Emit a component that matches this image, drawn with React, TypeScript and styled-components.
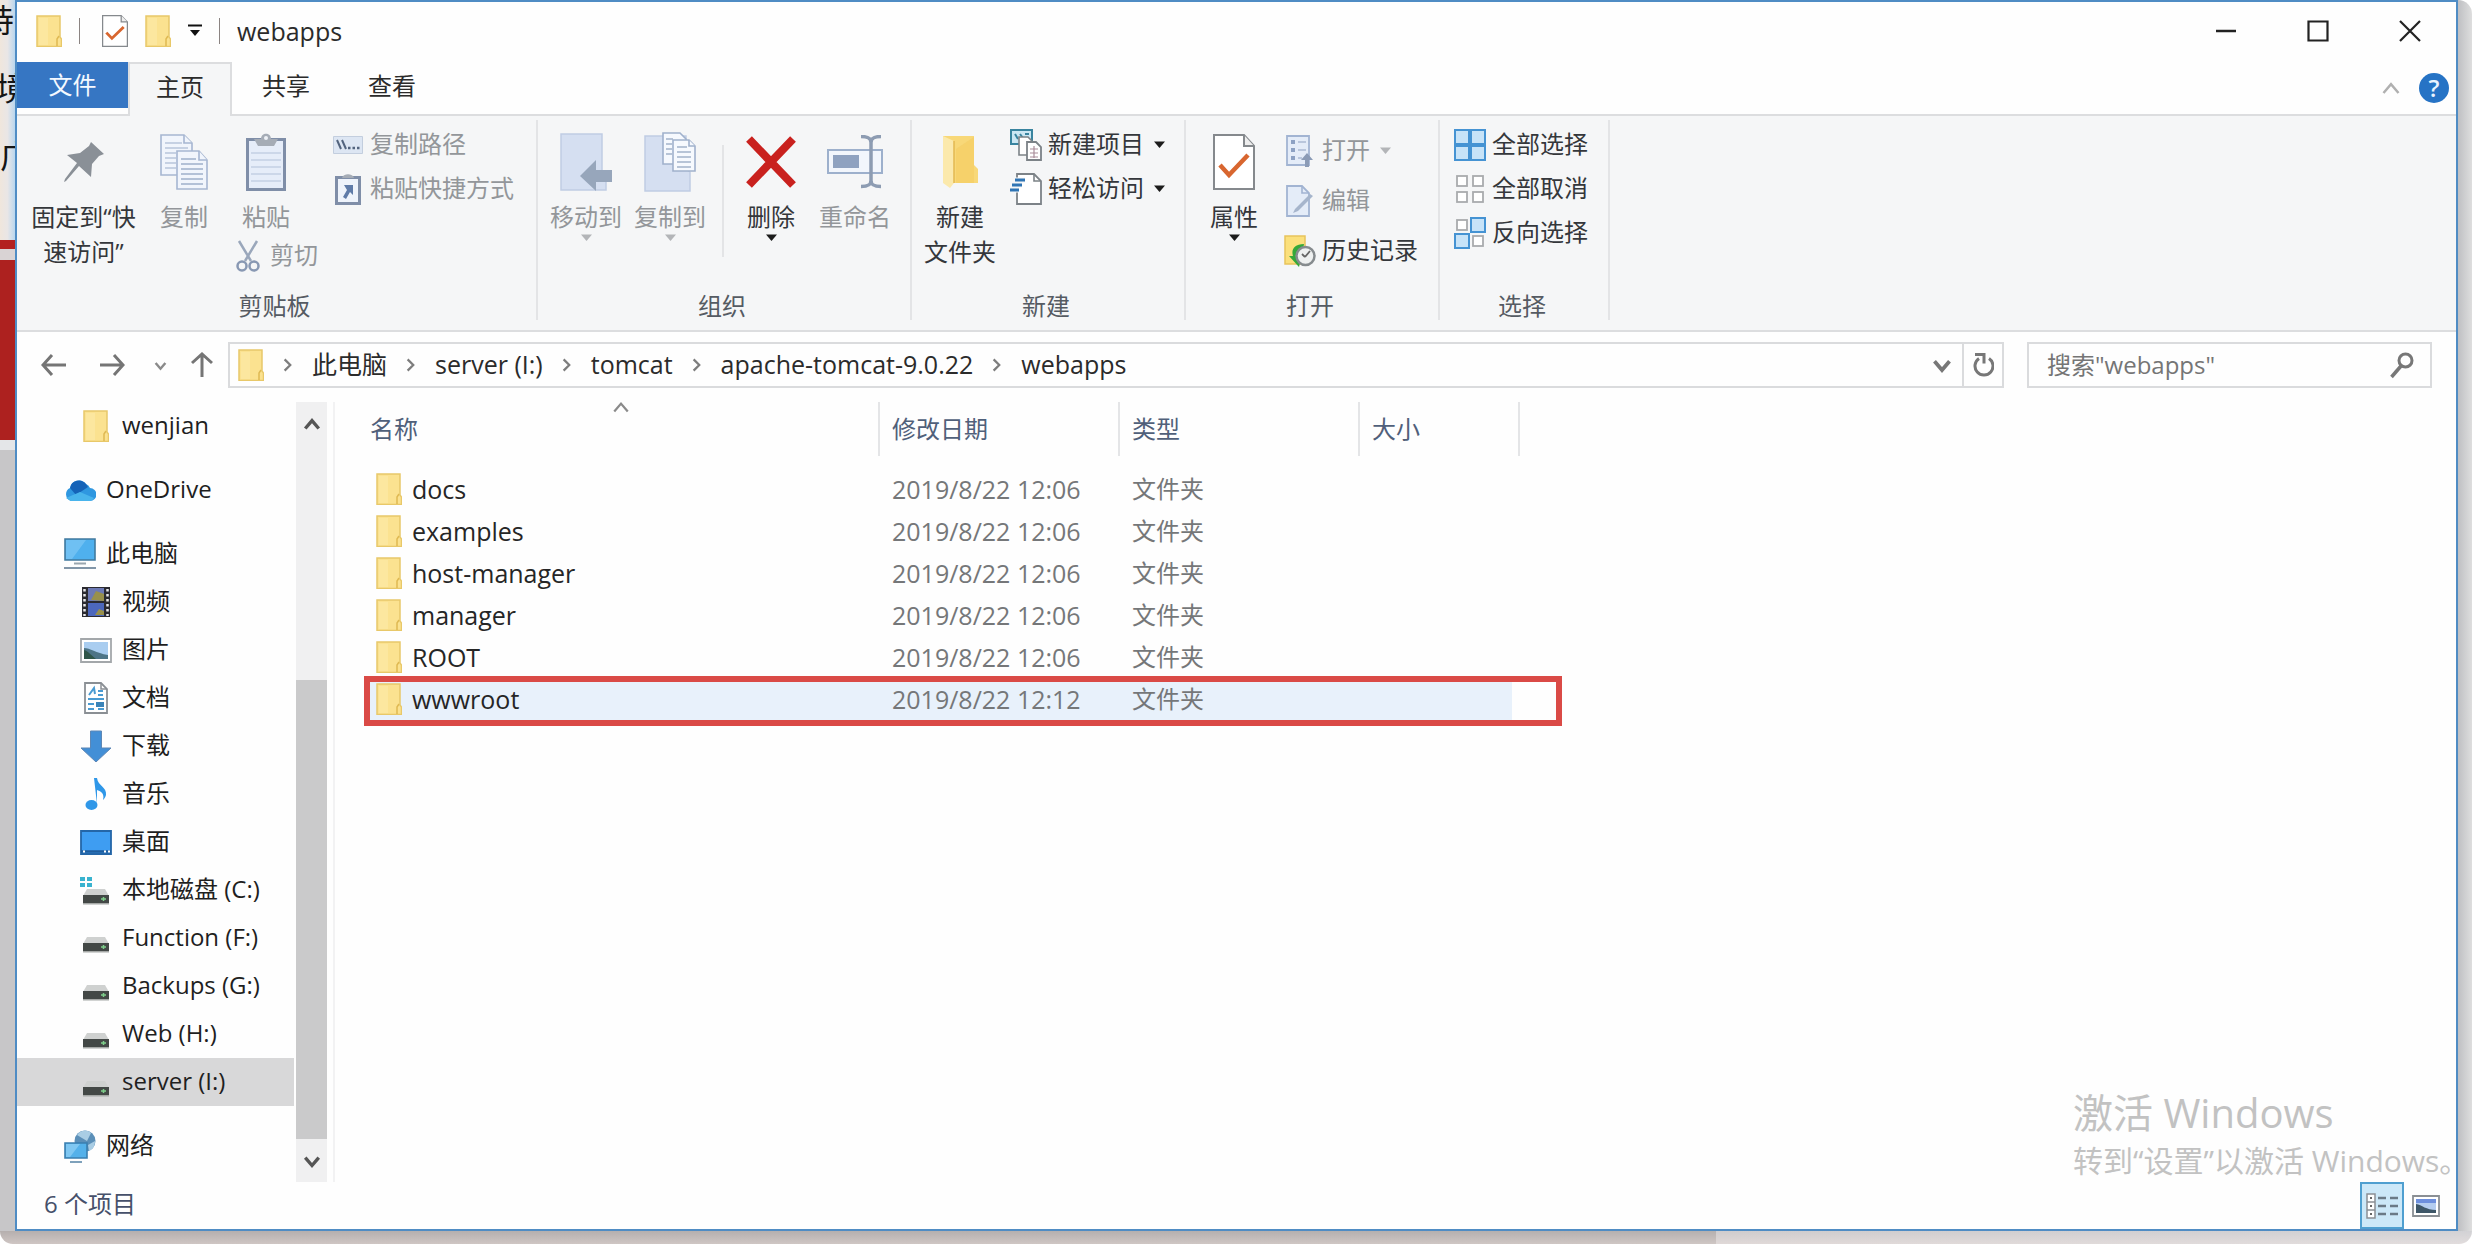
import React from "react";
import styled, { createGlobalStyle, css } from "styled-components";

const Global = createGlobalStyle`
  *, *::before, *::after { box-sizing: border-box; }
  body {
    margin: 0;
    background: #ffffff;
    font-family: "Open Sans", "Noto Sans CJK SC", "Microsoft YaHei", sans-serif;
    font-size: 24px;
    color: #2b2b2b;
  }
  button, input {
    font: inherit;
    color: inherit;
    background: none;
    border: 0;
    padding: 0;
    margin: 0;
  }
  svg { display: block; flex: none; }
  h1, ul, nav { margin: 0; padding: 0; list-style: none; }
`;

/* ---------- icons ---------- */

const FolderIcon = () => (
  <svg width="26" height="32" viewBox="0 0 26 32">
    <path d="M1 1h23v21l1.500 2v7.500H1z" fill="#fbe290" stroke="#e8c869" strokeWidth="1.500" />
    <path d="M3 3h9v27H3z" fill="#fdebae" opacity=".5" />
    <path d="M21 31v-7l2-3" fill="none" stroke="#dfb952" strokeWidth="1.500" />
  </svg>
);

const CheckDocIcon = ({ w, h }: { w: number; h: number }) => (
  <svg width={w} height={h} viewBox="0 0 42 56" preserveAspectRatio="none">
    <path d="M1 1h30l10 11v43H1z" fill="#fff" stroke="#85898d" strokeWidth="2" />
    <path d="M31 1v11h10" fill="#eee" stroke="#85898d" strokeWidth="2" />
    <path d="M7 31l9 10 19-20" fill="none" stroke="#d8662f" strokeWidth="4.500" />
  </svg>
);

const QuickMenuIcon = () => (
  <svg width="14" height="14" viewBox="0 0 14 14">
    <path d="M0 1.500h14" stroke="#111" strokeWidth="2" />
    <path d="M2 6h10l-5 6z" fill="#111" />
  </svg>
);

const CaretIcon = ({ color = "#1c1c1c" }: { color?: string }) => (
  <svg width="11" height="8" viewBox="0 0 11 8">
    <path d="M0 0.500h11L5.500 7z" fill={color} />
  </svg>
);

type Dir = "up" | "down" | "right";
const chevrons: Record<Dir, string> = {
  up: "M2 12l6-7 6 7",
  down: "M2 5l6 7 6-7",
  right: "M5 3l5 5-5 5",
};
const Chevron = ({ dir, color = "#777", width = 2, size = 18 }: { dir: Dir; color?: string; width?: number; size?: number }) => (
  <svg width={size} height={size} viewBox="0 0 16 16">
    <path d={chevrons[dir]} fill="none" stroke={color} strokeWidth={width} />
  </svg>
);

const MinimizeIcon = () => (
  <svg width="22" height="22" viewBox="0 0 22 22"><path d="M1 11h20" stroke="#222" strokeWidth="2.500" /></svg>
);
const MaximizeIcon = () => (
  <svg width="22" height="22" viewBox="0 0 22 22"><path d="M1.500 1.500h19v19h-19z" fill="none" stroke="#222" strokeWidth="2.200" /></svg>
);
const CloseIcon = () => (
  <svg width="22" height="22" viewBox="0 0 22 22"><path d="M1 1l20 20M21 1L1 21" stroke="#222" strokeWidth="2.200" /></svg>
);

const PinIcon = () => (
  <svg width="42" height="42" viewBox="0 0 42 42">
    <path d="M28 1l13 12-5 2-7 8-1 13-12-11L3 40l-2 1 1-3 12-16L4 14l13-2 9-7z" fill="#8a9097" />
  </svg>
);

const SheetPair = () => (
  <svg width="48" height="56" viewBox="0 0 48 56">
    <g fill="#f1f5fc" stroke="#a6b6d1" strokeWidth="1.600">
      <path d="M1 1h23l8 8v32H1z" />
      <path d="M24 1v8h8" />
      <path d="M17 17h22l8 9v29H17z" />
      <path d="M39 17v9h8" />
    </g>
    <path d="M5 9h17M5 14h23M5 19h11M5 24h11M5 29h11M5 34h11" stroke="#b8c5da" strokeWidth="1.500" />
    <path d="M21 25h15M21 30h22M21 35h22M21 40h22M21 45h22M21 50h22" stroke="#9fb0ca" strokeWidth="1.500" />
  </svg>
);

const ClipboardIcon = () => (
  <svg width="40" height="58" viewBox="0 0 40 58">
    <path d="M1.500 6.500h37v50h-37z" fill="#e6edf9" stroke="#7f8ea8" strokeWidth="3" />
    <path d="M5 20h30M5 27h30M5 34h30M5 41h30M5 48h30" stroke="#c3cfe3" strokeWidth="1.500" />
    <path d="M8 6h7c0-7 10-7 10 0h7l-4 7H12z" fill="#a5acb6" />
    <circle cx="20" cy="5" r="2" fill="#eef1f6" />
  </svg>
);

const ScissorsIcon = () => (
  <svg width="24" height="32" viewBox="0 0 24 32">
    <path d="M3 1l12 20M21 1L9 21" stroke="#9aa7bb" strokeWidth="2.500" />
    <circle cx="6" cy="26" r="4.500" fill="none" stroke="#8898b3" strokeWidth="2.500" />
    <circle cx="18" cy="26" r="4.500" fill="none" stroke="#8898b3" strokeWidth="2.500" />
  </svg>
);

const PathIcon = () => (
  <svg width="30" height="18" viewBox="0 0 30 18">
    <path d="M.5.5h29v17H.5z" fill="#dde6f3" stroke="#c3cede" />
    <path d="M4 4l4 9M9 4l4 9" stroke="#53647e" strokeWidth="2" />
    <path d="M15 12h2.500M19.500 12H22M24 12h2.500" stroke="#53647e" strokeWidth="2.500" />
  </svg>
);

const PasteShortcutIcon = () => (
  <svg width="26" height="32" viewBox="0 0 26 32">
    <path d="M1.500 4.500h23v26h-23z" fill="#eef3fb" stroke="#7f8ea8" strokeWidth="3" />
    <path d="M7 5c1-5 11-5 12 0z" fill="#a5acb6" />
    <path d="M9 12h9v10l-3-3-4 7-3-2 4-7z" fill="#5f7ba8" />
  </svg>
);

const MoveToIcon = () => (
  <svg width="52" height="58" viewBox="0 0 52 58">
    <path d="M1 1h41v37l4 2v17H1z" fill="#d5dff1" stroke="#c0cde4" strokeWidth="1.500" />
    <path d="M20 43l16-16v10h16v12H36v9z" fill="#97a6bb" />
  </svg>
);

const CopyToIcon = () => (
  <svg width="52" height="60" viewBox="0 0 52 60">
    <path d="M1 4h41v33l4 3v19H1z" fill="#d5dff1" stroke="#c0cde4" strokeWidth="1.500" />
    <g fill="#f6f9fe" stroke="#a0b1cc" strokeWidth="1.600">
      <path d="M19 1h17l6 6v25H19z" />
      <path d="M29 8h16l6 6v25H29z" />
      <path d="M45 8v6h6" />
    </g>
    <path d="M22 7h7M22 12h6M22 17h6M22 22h6M33 15h10M33 20h14M33 25h14M33 30h14M33 35h14" stroke="#a3b2ca" strokeWidth="1.500" />
  </svg>
);

const DeleteIcon = () => (
  <svg width="50" height="54" viewBox="0 0 50 54">
    <path d="M3 4l44 46M47 4L3 50" stroke="#c9211e" strokeWidth="8" />
  </svg>
);

const RenameIcon = () => (
  <svg width="56" height="54" viewBox="0 0 56 54">
    <path d="M1 15h54v23H1z" fill="#f2f6fc" stroke="#9db0cc" strokeWidth="2" />
    <path d="M6 20h26v13H6z" fill="#8fa2c0" />
    <path d="M34 1.500c6 0 10 1 10 6v38c0 5-4 6-10 6M54 1.500c-6 0-10 1-10 6v38c0 5 4 6 10 6" fill="none" stroke="#8d9cb2" strokeWidth="3.500" />
  </svg>
);

const NewFolderIcon = () => (
  <svg width="36" height="54" viewBox="0 0 36 54">
    <path d="M1 1h31v29l4 4v14H12L1 46z" fill="#f8d878" />
    <path d="M1 1l11 5v42l-4 5-7-5z" fill="#fbe9ac" />
    <path d="M12 6v42" stroke="#e3b951" strokeWidth="1.500" />
    <path d="M14 14l18-12v46H14z" fill="#f3ca5c" opacity=".5" />
  </svg>
);

const NewItemIcon = () => (
  <svg width="32" height="32" viewBox="0 0 32 32">
    <path d="M1 1h21v14H1z" fill="#cbe7f3" stroke="#39849f" strokeWidth="2" />
    <path d="M5 5l3 5M10 5l3 4M15 5h4" stroke="#39849f" strokeWidth="2" />
    <path d="M9 8h9l5 5v13H9z" fill="#fff" stroke="#7c8287" strokeWidth="1.600" />
    <path d="M17 13h9l5 5v13H17z" fill="#fff" stroke="#7c8287" strokeWidth="1.800" />
    <path d="M20 20h8M20 24h8M20 28h8M24 17v12" stroke="#a98d9a" strokeWidth="1.200" />
  </svg>
);

const EasyAccessIcon = () => (
  <svg width="32" height="32" viewBox="0 0 32 32">
    <path d="M7 1h17l7 7v23H7z" fill="#fff" stroke="#7c8287" strokeWidth="1.800" />
    <path d="M24 1v7h7" fill="none" stroke="#7c8287" strokeWidth="1.600" />
    <path d="M4 7h11M2 12h10M0 17h9" stroke="#f5f6f7" strokeWidth="5" />
    <path d="M5 7h10M2 12h10M0 17h9" stroke="#2f74b4" strokeWidth="3" />
  </svg>
);

const OpenIcon = () => (
  <svg width="28" height="32" viewBox="0 0 28 32">
    <path d="M1 1h22v29H1z" fill="#e4ecf8" stroke="#a2b4d2" strokeWidth="1.800" />
    <path d="M5 5h4v4H5zM5 13h4v4H5zM5 21h4v4H5z" fill="#8da1c3" />
    <path d="M12 7h8M12 15h8M12 23h4" stroke="#b9c6dc" strokeWidth="2" />
    <path d="M19 32V25h-4l6-7 6 7h-4v7z" fill="#8b9bb6" />
  </svg>
);

const EditIcon = () => (
  <svg width="28" height="32" viewBox="0 0 28 32">
    <path d="M1 1h15l7 7v23H1z" fill="#e4ecf8" stroke="#a2b4d2" strokeWidth="1.800" />
    <path d="M16 1v7h7" fill="none" stroke="#a2b4d2" strokeWidth="1.600" />
    <path d="M7 28l2-4L24 9l3 2-15 15z" fill="#a6b5cc" />
  </svg>
);

const HistoryIcon = () => (
  <svg width="32" height="32" viewBox="0 0 32 32">
    <path d="M1 1h20v28H1z" fill="#fbe07c" stroke="#e8c45c" strokeWidth="1.500" />
    <path d="M20 9C10 9 7 15 9 21l-4 0 10 11 3-12z" fill="#35a83a" />
    <circle cx="21.500" cy="21" r="9" fill="#eef0f0" stroke="#868b8e" strokeWidth="2.500" />
    <path d="M21 22l5-6M21 22l-3-3" stroke="#666" strokeWidth="1.800" />
  </svg>
);

const SelectIcon = ({ on }: { on: boolean[] }) => {
  const spots = [[1, 1], [17, 1], [1, 17], [17, 17]];
  return (
    <svg width="32" height="32" viewBox="0 0 32 32">
      {spots.map(([x, y], i) =>
        on[i] ? (
          <rect key={i} x={x} y={y} width="14" height="14" fill="#c7e3f8" stroke="#4593d3" strokeWidth="2" />
        ) : (
          <rect key={i} x={x + 2} y={y + 2} width="10" height="10" fill="#fff" stroke="#a9abad" strokeWidth="1.800" />
        )
      )}
    </svg>
  );
};

const HelpMark = styled.span`
  display: flex;
  align-items: center;
  justify-content: center;
  width: 30px;
  height: 30px;
  border-radius: 50%;
  background: #2673c5;
  color: #e9f3ff;
  font-size: 24px;
  line-height: 28px;
  font-weight: 600;
`;

const ArrowIcon = ({ turn, color = "#757575" }: { turn: number; color?: string }) => (
  <svg width="26" height="26" viewBox="0 0 26 26">
    <path d="M25 13H2M11 3L2 13l9 10" fill="none" stroke={color} strokeWidth="3" transform={`rotate(${turn} 13 13)`} />
  </svg>
);

const RefreshIcon = () => (
  <svg width="22" height="26" viewBox="0 0 22 26">
    <path d="M17 6.500a9 9 0 1 1-10 0" fill="none" stroke="#777" strokeWidth="3" />
    <path d="M3 2.500h9v9" fill="none" stroke="#777" strokeWidth="3" />
  </svg>
);

const SearchIcon = () => (
  <svg width="24" height="28" viewBox="0 0 24 28">
    <circle cx="15.500" cy="9.500" r="6.500" fill="none" stroke="#777" strokeWidth="3" />
    <path d="M11 15L1.500 26" stroke="#777" strokeWidth="3.500" />
  </svg>
);

const CloudIcon = () => (
  <svg width="32" height="24" viewBox="0 0 32 24">
    <path d="M7 23a7 7 0 0 1-1-13A9 9 0 0 1 22 6a8 8 0 0 1 4 4 6.500 6.500 0 0 1 0 13z" fill="#2f97e0" />
    <path d="M6 10A9 9 0 0 1 22 6l2 3-12 8z" fill="#1563b8" />
    <path d="M2 20l14-6 14 6a6 6 0 0 1-4 3H7z" fill="#49b4ec" />
  </svg>
);

const PcIcon = () => (
  <svg width="32" height="32" viewBox="0 0 32 32">
    <path d="M1 1h30v21H1z" fill="#4fb0ee" stroke="#417a9f" strokeWidth="1.600" />
    <path d="M2 2h20L8 21H2z" fill="#85cbf6" opacity=".6" />
    <path d="M10 25.500h12" stroke="#9aa6ae" strokeWidth="2" />
    <path d="M0 30h32" stroke="#8296a8" strokeWidth="2" />
  </svg>
);

const VideoIcon = () => (
  <svg width="28" height="32" viewBox="0 0 28 32">
    <path d="M0 1h28v30H0z" fill="#2a2a30" />
    <path d="M6 2h16v13H6z" fill="#6c79b4" />
    <path d="M6 17h16v13H6z" fill="#4c67bd" />
    <path d="M9 14l5-9 8 3v7zM13 29l4-6 5 2v4z" fill="#98904b" />
    <path d="M2.500 3v27M25.500 3v27" stroke="#e8e8ea" strokeWidth="2.500" strokeDasharray="2.500 2.500" />
  </svg>
);

const PictureIcon = () => (
  <svg width="32" height="25" viewBox="0 0 32 25">
    <path d="M1 1h30v23H1z" fill="#fff" stroke="#a3a7aa" strokeWidth="1.800" />
    <path d="M4 4h24v17H4z" fill="#a9cdf0" />
    <path d="M4 10c6 0 12 5 24 7v4H4z" fill="#4d7486" />
    <path d="M4 12c4 1 7 5 12 9H4z" fill="#2f5549" />
  </svg>
);

const DocIcon = () => (
  <svg width="24" height="32" viewBox="0 0 24 32">
    <path d="M1 1h16l6 6v24H1z" fill="#fff" stroke="#8a8f94" strokeWidth="1.800" />
    <path d="M17 1v6h6" fill="none" stroke="#8a8f94" strokeWidth="1.500" />
    <path d="M5 13l5-7 1 6M14 9h5M14 13h5M4 17h16M4 22h6M4 27h6M14 27h6" fill="none" stroke="#4a9bd2" strokeWidth="2" />
    <path d="M12 20h8v5h-8z" fill="#3a84b9" />
  </svg>
);

const DownloadIcon = () => (
  <svg width="32" height="32" viewBox="0 0 32 32">
    <path d="M10.500 1h11v17H31L16 32 1 18h9.500z" fill="#438fd6" stroke="#5d87b5" />
  </svg>
);

const MusicIcon = () => (
  <svg width="24" height="34" viewBox="0 0 24 34">
    <path d="M10 1h3c1 8 10 9 9 17-1 3-2 4-3 5 2-7-3-9-6-10v14" fill="#2f97e8" />
    <ellipse cx="7.500" cy="28" rx="6" ry="5" fill="#2f97e8" />
  </svg>
);

const DesktopIcon = () => (
  <svg width="32" height="25" viewBox="0 0 32 25">
    <path d="M1 1h30v23H1z" fill="#3e9df2" stroke="#2466a8" strokeWidth="1.800" />
    <path d="M1 21.500h30" stroke="#1f5d9c" strokeWidth="2.500" />
    <path d="M3 21.500h2M24 21.500h2M28 21.500h2" stroke="#fff" strokeWidth="2" />
  </svg>
);

const DriveIcon = ({ system }: { system?: boolean }) => (
  <svg width="32" height="32" viewBox="0 0 32 32">
    <path d="M7 15h18l4 7H3z" fill="#cfd1d0" />
    <path d="M3 21h26v8.500H3z" fill="#434846" />
    <path d="M3 29h26v1.500H3z" fill="#a5a8a6" />
    <path d="M21 25h5M23.500 23v4" stroke="#7fcf8b" strokeWidth="1.500" />
    {system && <path d="M0 3h5v4H0zM7 3h5v4H7zM0 9h5v4H0zM7 9h5v4H7z" fill="#39b3cf" />}
  </svg>
);

const NetworkIcon = () => (
  <svg width="32" height="34" viewBox="0 0 32 34">
    <circle cx="21" cy="12" r="10.500" fill="#5b8fb8" />
    <path d="M13 6c5-6 11-5 14-2l-4 8zM24 16l7-4c0 6-3 9-6 10z" fill="#a9cde4" />
    <path d="M1 14h22v15H1z" fill="#54b1ea" stroke="#3a7fb0" strokeWidth="1.600" />
    <path d="M2 15h14L6 28H2z" fill="#92d0f5" opacity=".7" />
    <path d="M6 33h12" stroke="#7ea1bb" strokeWidth="2" />
  </svg>
);

const DetailsViewIcon = () => (
  <svg width="32" height="26" viewBox="0 0 32 26">
    <path d="M1 1h8v8H1zM1 9h8v8H1zM1 17h8v8H1z" fill="#fff" stroke="#8a8f94" strokeWidth="1.500" />
    <path d="M4 5h2M4 13h2M4 21h2" stroke="#666" strokeWidth="2" />
    <path d="M12 5h8M24 5h8M12 13h8M24 13h8M12 21h8M24 21h8" stroke="#6b7a86" strokeWidth="2.500" />
  </svg>
);

const ThumbsViewIcon = () => (
  <svg width="28" height="22" viewBox="0 0 28 22">
    <path d="M1 1h26v20H1z" fill="#fff" stroke="#8a8f94" strokeWidth="1.800" />
    <path d="M4 4h20v14H4z" fill="#b4cdf0" />
    <path d="M4 4h20v4H4z" fill="#6d8fdd" />
    <path d="M4 9c6 1 10 6 20 6v3H4z" fill="#3e5768" />
  </svg>
);

/* ---------- desktop behind the window ---------- */

const Desktop = styled.div`
  min-height: 100vh;
  display: grid;
  grid-template-columns: 15px minmax(0, 1fr) 14px;
  grid-template-rows: minmax(0, 1fr) 13px;
`;

const Gutter = styled.div`
  overflow: hidden;
  display: flex;
  flex-direction: column;
  background: linear-gradient(90deg, #f0e6dc, #e9e6e6 50%, #b9d6ee);
`;

const GutterText = styled.span<{ $shift?: number }>`
  height: 68px;
  font-size: 32px;
  line-height: 40px;
  white-space: nowrap;
  color: #151515;
  margin-left: ${(p) => -(p.$shift ?? 0)}px;
`;

const GutterBand = styled.span<{ $color: string; $size?: number }>`
  background: ${(p) => p.$color};
  ${(p) => (p.$size ? css`height: ${p.$size}px;` : css`flex: 1;`)}
`;

const GutterSpace = styled.span`
  height: 36px;
`;

const RightShade = styled.div`
  border-top-right-radius: 14px;
  background: linear-gradient(90deg, #bfc0c3, #dedede);
`;

const BottomShade = styled.div`
  grid-column: 1 / -1;
  border-radius: 0 0 14px 14px;
  background:
    linear-gradient(180deg, transparent, rgba(255, 240, 235, 0.35)),
    linear-gradient(90deg, #b5afae 0, #b5b0af 69.4%, #cfcccd 69.4%, #d2d2d5 100%);
`;

/* ---------- window ---------- */

const Window = styled.main`
  position: relative;
  display: flex;
  flex-direction: column;
  background: #fefefe;
  border: 2px solid #4f8cc4;
`;

const TitleBar = styled.header`
  display: flex;
  align-items: center;
  height: 60px;
  padding-left: 19px;
`;

const QuickBar = styled.div`
  display: flex;
  align-items: center;
  gap: 17px;
  padding-bottom: 2px;
`;

const QuickSeparator = styled.span<{ $wide?: boolean }>`
  width: 1px;
  height: 26px;
  background: #8b8482;
  margin-right: ${(p) => (p.$wide ? "5px" : "0")};
`;

const Title = styled.h1`
  font-size: 25px;
  font-weight: 400;
  line-height: 32px;
`;

const WindowControls = styled.div`
  display: flex;
  margin-left: auto;
  align-self: stretch;
`;

const ControlButton = styled.button`
  width: 92px;
  padding-bottom: 2px;
  display: flex;
  align-items: center;
  justify-content: center;
`;

const TabRow = styled.nav`
  display: flex;
  gap: 2px;
  height: 54px;
  border-bottom: 2px solid #dcdddf;
`;

const Tab = styled.button<{ $kind?: "file" | "active" }>`
  width: 104px;
  padding-bottom: 4px;
  line-height: 32px;
  ${(p) =>
    p.$kind === "file" &&
    css`
      width: 111px;
      height: 46px;
      padding: 0;
      color: #f4f9ff;
      background: #3676c3;
      margin-right: -2px;
    `}
  ${(p) =>
    p.$kind === "active" &&
    css`
      margin-bottom: -2px;
      background: #f5f6f7;
      border: 2px solid #dcdddf;
      border-bottom: 0;
      padding-bottom: 6px;
    `}
`;

const TabTools = styled.div`
  display: flex;
  align-items: center;
  gap: 18px;
  margin-left: auto;
  padding-right: 7px;
`;

const Ribbon = styled.section`
  display: flex;
  padding: 4px 0 10px;
  background: #f5f6f7;
`;

const Group = styled.div<{ $width: number }>`
  display: flex;
  flex-direction: column;
  width: ${(p) => p.$width}px;
  border-right: 2px solid #e3e4e6;
`;

const GroupBody = styled.div`
  display: flex;
  gap: 4px;
  height: 172px;
  padding-left: 8px;
`;

const GroupLabel = styled.div`
  padding-right: 4px;
  text-align: center;
  line-height: 28px;
  color: #555b63;
`;

const BigButton = styled.button<{ $width?: number; $off?: boolean }>`
  display: flex;
  flex-direction: column;
  align-items: center;
  align-self: flex-start;
  width: ${(p) => p.$width ?? 80}px;
  padding-top: 10px;
  line-height: 35px;
  white-space: nowrap;
  color: ${(p) => (p.$off ? "#93969a" : "#34373b")};
`;

const BigIcon = styled.span`
  display: flex;
  align-items: center;
  height: 64px;
  margin-bottom: 5px;
`;

const Column = styled.div<{ $top?: number }>`
  display: flex;
  flex-direction: column;
  align-items: flex-start;
  padding-top: ${(p) => p.$top ?? 0}px;
`;

const SmallButton = styled.button<{ $off?: boolean; $tall?: boolean }>`
  display: flex;
  align-items: center;
  gap: 6px;
  height: ${(p) => (p.$tall ? 50 : 44)}px;
  padding: 0 4px 0 6px;
  white-space: nowrap;
  color: ${(p) => (p.$off ? "#93969a" : "#34373b")};
`;

const SmallIcon = styled.span`
  display: flex;
  justify-content: center;
  width: 32px;
`;

const Label = styled.span`
  padding-bottom: 3px;
  line-height: 32px;
`;

const SmallCaret = styled.span`
  margin-left: 4px;
`;

const GroupRule = styled.span`
  width: 2px;
  height: 112px;
  margin: 25px 3px 0 8px;
  background: #e3e4e6;
`;

const NavBar = styled.div`
  display: flex;
  align-items: center;
  height: 72px;
  padding: 0 24px 4px 8px;
  border-top: 2px solid #dcdddf;
`;

const NavButton = styled.button<{ $width: number }>`
  display: flex;
  align-items: center;
  justify-content: center;
  width: ${(p) => p.$width}px;
  height: 46px;
`;

const AddressBox = styled.div`
  flex: 1;
  display: flex;
  align-items: center;
  height: 46px;
  margin-left: 3px;
  padding-left: 8px;
  border: 2px solid #dadbdd;
`;

const Crumbs = styled.ul`
  display: flex;
  flex: 1;
`;

const Crumb = styled.li`
  display: flex;
  align-items: center;
  font-size: 25px;
  white-space: nowrap;
`;

const CrumbArrow = styled.span`
  display: flex;
  justify-content: center;
  width: 48px;
`;

const CrumbLink = styled.a`
  padding-bottom: 2px;
  line-height: 32px;
  color: inherit;
  text-decoration: none;
`;

const AddressButton = styled.button<{ $ruled?: boolean }>`
  display: flex;
  align-items: center;
  justify-content: center;
  align-self: stretch;
  width: 40px;
  border-left: ${(p) => (p.$ruled ? "2px solid #dadbdd" : "0")};
`;

const SearchBox = styled.label`
  display: flex;
  align-items: center;
  width: 405px;
  height: 46px;
  margin-left: 23px;
  padding: 0 16px 0 18px;
  border: 2px solid #dadbdd;
`;

const SearchInput = styled.input`
  flex: 1;
  min-width: 0;
  line-height: 32px;
  outline: 0;
  &::placeholder {
    color: #757575;
    opacity: 1;
  }
`;

const Body = styled.div`
  flex: 1;
  display: flex;
`;

const Tree = styled.ul`
  width: 279px;
  padding-right: 2px;
`;

const TreeItem = styled.li<{ $top?: boolean }>`
  margin-top: ${(p) => (p.$top ? 16 : 0)}px;
`;

const TreeLink = styled.a<{ $top?: boolean; $selected?: boolean }>`
  display: flex;
  align-items: center;
  gap: 10px;
  height: 48px;
  padding-left: ${(p) => (p.$top ? 47 : 63)}px;
  color: #1f1f1f;
  text-decoration: none;
  white-space: nowrap;
  background: ${(p) => (p.$selected ? "#d8d8d9" : "none")};
`;

const TreeIcon = styled.span`
  display: flex;
  justify-content: center;
  width: 32px;
`;

const ScrollBar = styled.div`
  display: flex;
  flex-direction: column;
  width: 31px;
  background: #f0f0f1;
`;

const ScrollButton = styled.button`
  display: flex;
  align-items: center;
  justify-content: center;
  height: 43px;
`;

const ScrollSpace = styled.span`
  flex: 235;
`;

const ScrollThumb = styled.span`
  flex: 458;
  background: #cacacb;
`;

const Files = styled.section`
  flex: 1;
  margin-left: 6px;
  padding-left: 29px;
  border-left: 2px solid #f2f2f3;
`;

const FileTable = styled.table`
  table-layout: fixed;
  width: 1156px;
  border-collapse: separate;
  border-spacing: 0;
`;

const HeadCell = styled.th`
  padding: 0 0 12px;
  font-weight: 400;
  text-align: left;
`;

const HeadInner = styled.div<{ $first?: boolean }>`
  position: relative;
  height: 54px;
  padding-left: ${(p) => (p.$first ? 6 : 12)}px;
  line-height: 54px;
  color: #50607a;
  border-right: 2px solid #e4e5e7;
`;

const SortMark = styled.span`
  position: absolute;
  top: -4px;
  left: 50%;
  margin-left: -9px;
`;

const FileRow = styled.tr<{ $selected?: boolean }>`
  --row: ${(p) => (p.$selected ? "#e8f1fb" : "transparent")};
`;

const FileCell = styled.td`
  height: 42px;
  padding: 0 0 0 12px;
  font-size: 25px;
  line-height: 32px;
  white-space: nowrap;
  color: #757779;
  background: var(--row);
  background-clip: padding-box;
  &:last-child {
    border-right: 8px solid transparent;
  }
`;

const TypeCell = styled(FileCell)`
  font-size: 24px;
`;

const NameCell = styled(FileCell)`
  position: relative;
  color: #262626;
`;

const NameInner = styled.span`
  display: flex;
  align-items: center;
  gap: 10px;
`;

const Highlight = styled.span`
  position: absolute;
  z-index: 1;
  top: -2px;
  left: 0;
  width: 1198px;
  height: 50px;
  border: 6px solid #da4a46;
  pointer-events: none;
`;

const StatusBar = styled.footer`
  display: flex;
  align-items: center;
  justify-content: space-between;
  height: 47px;
  padding: 0 16px 0 27px;
  color: #46506a;
`;

const ViewButtons = styled.div`
  display: flex;
  gap: 8px;
`;

const ViewButton = styled.button<{ $on?: boolean }>`
  display: flex;
  align-items: center;
  justify-content: center;
  width: ${(p) => (p.$on ? 44 : 28)}px;
  height: 47px;
  border: ${(p) => (p.$on ? "2px solid #4f9fd0" : "0")};
  background: ${(p) => (p.$on ? "#cce8f8" : "none")};
`;

const Watermark = styled.div`
  position: absolute;
  right: 0;
  bottom: 47px;
  width: 383px;
  white-space: nowrap;
  color: #c2c2c2;
  pointer-events: none;
`;

const WatermarkTitle = styled.div`
  font-size: 40px;
  line-height: 54px;
`;

const WatermarkText = styled.div`
  font-size: 30px;
  line-height: 42px;
`;

/* ---------- data ---------- */

type Node = { label: string; icon: React.ReactNode; top?: boolean; selected?: boolean };

const tree: Node[] = [
  { label: "wenjian", icon: <FolderIcon /> },
  { label: "OneDrive", icon: <CloudIcon />, top: true },
  { label: "此电脑", icon: <PcIcon />, top: true },
  { label: "视频", icon: <VideoIcon /> },
  { label: "图片", icon: <PictureIcon /> },
  { label: "文档", icon: <DocIcon /> },
  { label: "下载", icon: <DownloadIcon /> },
  { label: "音乐", icon: <MusicIcon /> },
  { label: "桌面", icon: <DesktopIcon /> },
  { label: "本地磁盘 (C:)", icon: <DriveIcon system /> },
  { label: "Function (F:)", icon: <DriveIcon /> },
  { label: "Backups (G:)", icon: <DriveIcon /> },
  { label: "Web (H:)", icon: <DriveIcon /> },
  { label: "server (I:)", icon: <DriveIcon />, selected: true },
  { label: "网络", icon: <NetworkIcon />, top: true },
];

const files = [
  { name: "docs", date: "2019/8/22 12:06" },
  { name: "examples", date: "2019/8/22 12:06" },
  { name: "host-manager", date: "2019/8/22 12:06" },
  { name: "manager", date: "2019/8/22 12:06" },
  { name: "ROOT", date: "2019/8/22 12:06" },
  { name: "wwwroot", date: "2019/8/22 12:12", selected: true },
];

const crumbs = ["此电脑", "server (I:)", "tomcat", "apache-tomcat-9.0.22", "webapps"];

/* ---------- parts ---------- */

type BigProps = { icon: React.ReactNode; lines: string[]; off?: boolean; caret?: boolean; width?: number };
const Big = ({ icon, lines, off, caret, width }: BigProps) => (
  <BigButton $off={off} $width={width}>
    <BigIcon>{icon}</BigIcon>
    {lines.map((line) => (
      <span key={line}>{line}</span>
    ))}
    {caret && <CaretIcon color={off ? "#b3b5b8" : undefined} />}
  </BigButton>
);

type SmallProps = { icon: React.ReactNode; label: string; off?: boolean; caret?: boolean; tall?: boolean };
const Small = ({ icon, label, off, caret, tall }: SmallProps) => (
  <SmallButton $off={off} $tall={tall}>
    <SmallIcon>{icon}</SmallIcon>
    <Label>{label}</Label>
    {caret && (
      <SmallCaret>
        <CaretIcon color={off ? "#b3b5b8" : undefined} />
      </SmallCaret>
    )}
  </SmallButton>
);

export default function App() {
  return (
    <>
      <Global />
      <Desktop>
        <Gutter>
          <GutterText $shift={18}>持</GutterText>
          <GutterText $shift={4}>境</GutterText>
          <GutterText>广</GutterText>
          <GutterSpace />
          <GutterBand $color="#b3201f" $size={9} />
          <GutterBand $color="#d9d3d4" $size={11} />
          <GutterBand $color="#ad211f" $size={180} />
          <GutterBand $color="#e4e6e8" $size={10} />
          <GutterBand $color="#c7c6c8" />
        </Gutter>

        <Window>
          <TitleBar>
            <QuickBar>
              <FolderIcon />
              <QuickSeparator $wide />
              <CheckDocIcon w={26} h={32} />
              <FolderIcon />
              <QuickMenuIcon />
              <QuickSeparator />
              <Title>webapps</Title>
            </QuickBar>
            <WindowControls>
              <ControlButton aria-label="最小化"><MinimizeIcon /></ControlButton>
              <ControlButton aria-label="最大化"><MaximizeIcon /></ControlButton>
              <ControlButton aria-label="关闭"><CloseIcon /></ControlButton>
            </WindowControls>
          </TitleBar>

          <TabRow>
            <Tab $kind="file">文件</Tab>
            <Tab $kind="active">主页</Tab>
            <Tab>共享</Tab>
            <Tab>查看</Tab>
            <TabTools>
              <button aria-label="折叠功能区"><Chevron dir="up" color="#b0b0b0" width={2} size={20} /></button>
              <button aria-label="帮助"><HelpMark>?</HelpMark></button>
            </TabTools>
          </TabRow>

          <Ribbon>
            <Group $width={521}>
              <GroupBody>
                <Big icon={<PinIcon />} lines={["固定到“快", "速访问”"]} width={117} />
                <Big icon={<SheetPair />} lines={["复制"]} off width={76} />
                <Column>
                  <Big icon={<ClipboardIcon />} lines={["粘贴"]} off />
                  <Small icon={<ScissorsIcon />} label="剪切" off />
                </Column>
                <Column $top={3}>
                  <Small icon={<PathIcon />} label="复制路径" off />
                  <Small icon={<PasteShortcutIcon />} label="粘贴快捷方式" off />
                </Column>
              </GroupBody>
              <GroupLabel>剪贴板</GroupLabel>
            </Group>

            <Group $width={374}>
              <GroupBody>
                <Big icon={<MoveToIcon />} lines={["移动到"]} off caret />
                <Big icon={<CopyToIcon />} lines={["复制到"]} off caret />
                <GroupRule />
                <Big icon={<DeleteIcon />} lines={["删除"]} caret />
                <Big icon={<RenameIcon />} lines={["重命名"]} off />
              </GroupBody>
              <GroupLabel>组织</GroupLabel>
            </Group>

            <Group $width={274}>
              <GroupBody>
                <Big icon={<NewFolderIcon />} lines={["新建", "文件夹"]} />
                <Column $top={3}>
                  <Small icon={<NewItemIcon />} label="新建项目" caret />
                  <Small icon={<EasyAccessIcon />} label="轻松访问" caret />
                </Column>
              </GroupBody>
              <GroupLabel>新建</GroupLabel>
            </Group>

            <Group $width={254}>
              <GroupBody>
                <Big icon={<CheckDocIcon w={42} h={56} />} lines={["属性"]} caret />
                <Column $top={6}>
                  <Small icon={<OpenIcon />} label="打开" off caret tall />
                  <Small icon={<EditIcon />} label="编辑" off tall />
                  <Small icon={<HistoryIcon />} label="历史记录" tall />
                </Column>
              </GroupBody>
              <GroupLabel>打开</GroupLabel>
            </Group>

            <Group $width={170}>
              <GroupBody>
                <Column $top={3}>
                  <Small icon={<SelectIcon on={[true, true, true, true]} />} label="全部选择" />
                  <Small icon={<SelectIcon on={[false, false, false, false]} />} label="全部取消" />
                  <Small icon={<SelectIcon on={[false, true, true, false]} />} label="反向选择" />
                </Column>
              </GroupBody>
              <GroupLabel>选择</GroupLabel>
            </Group>
          </Ribbon>

          <NavBar>
            <NavButton $width={58} aria-label="后退"><ArrowIcon turn={0} /></NavButton>
            <NavButton $width={58} aria-label="前进"><ArrowIcon turn={180} /></NavButton>
            <NavButton $width={38} aria-label="最近浏览的位置"><Chevron dir="down" size={13} width={3} color="#8a8a8a" /></NavButton>
            <NavButton $width={46} aria-label="上移"><ArrowIcon turn={90} /></NavButton>
            <AddressBox>
              <FolderIcon />
              <Crumbs>
                {crumbs.map((name) => (
                  <Crumb key={name}>
                    <CrumbArrow><Chevron dir="right" color="#7d7d7d" /></CrumbArrow>
                    <CrumbLink href="#">{name}</CrumbLink>
                  </Crumb>
                ))}
              </Crumbs>
              <AddressButton aria-label="以前的位置"><Chevron dir="down" width={3} size={20} /></AddressButton>
              <AddressButton $ruled aria-label="刷新"><RefreshIcon /></AddressButton>
            </AddressBox>
            <SearchBox>
              <SearchInput type="text" placeholder={'搜索"webapps"'} aria-label="搜索" />
              <SearchIcon />
            </SearchBox>
          </NavBar>

          <Body>
            <Tree>
              {tree.map((n) => (
                <TreeItem key={n.label} $top={n.top}>
                  <TreeLink href="#" $top={n.top} $selected={n.selected}>
                    <TreeIcon>{n.icon}</TreeIcon>
                    <Label>{n.label}</Label>
                  </TreeLink>
                </TreeItem>
              ))}
            </Tree>
            <ScrollBar>
              <ScrollButton aria-label="向上滚动"><Chevron dir="up" color="#555" width={3} /></ScrollButton>
              <ScrollSpace />
              <ScrollThumb />
              <ScrollButton aria-label="向下滚动"><Chevron dir="down" color="#555" width={3} /></ScrollButton>
            </ScrollBar>

            <Files>
              <FileTable>
                <colgroup>
                  <col width="516" />
                  <col width="240" />
                  <col width="240" />
                  <col width="160" />
                </colgroup>
                <thead>
                  <tr>
                    <HeadCell>
                      <HeadInner $first>
                        名称
                        <SortMark><Chevron dir="up" color="#8a8a8a" /></SortMark>
                      </HeadInner>
                    </HeadCell>
                    <HeadCell><HeadInner>修改日期</HeadInner></HeadCell>
                    <HeadCell><HeadInner>类型</HeadInner></HeadCell>
                    <HeadCell><HeadInner>大小</HeadInner></HeadCell>
                  </tr>
                </thead>
                <tbody>
                  {files.map((f) => (
                    <FileRow key={f.name} $selected={f.selected}>
                      <NameCell>
                        <NameInner>
                          <FolderIcon />
                          {f.name}
                        </NameInner>
                        {f.selected && <Highlight />}
                      </NameCell>
                      <FileCell>{f.date}</FileCell>
                      <TypeCell>文件夹</TypeCell>
                      <FileCell />
                    </FileRow>
                  ))}
                </tbody>
              </FileTable>
            </Files>
          </Body>

          <StatusBar>
            <Label>6 个项目</Label>
            <ViewButtons>
              <ViewButton $on aria-label="详细信息"><DetailsViewIcon /></ViewButton>
              <ViewButton aria-label="大缩略图"><ThumbsViewIcon /></ViewButton>
            </ViewButtons>
          </StatusBar>

          <Watermark>
            <WatermarkTitle>激活 Windows</WatermarkTitle>
            <WatermarkText>转到“设置”以激活 Windows。</WatermarkText>
          </Watermark>
        </Window>

        <RightShade />
        <BottomShade />
      </Desktop>
    </>
  );
}
